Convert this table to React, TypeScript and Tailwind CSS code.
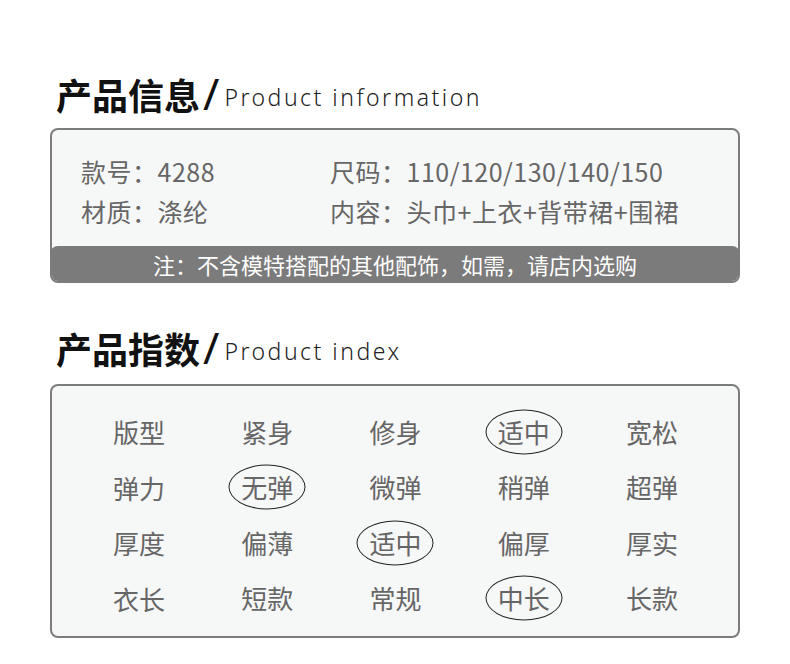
import React from "react";

const cjk = '"Noto Sans CJK SC", "Noto Sans", sans-serif';

function Heading({ zh, en }: { zh: string; en: string }) {
  return (
    <div className="flex items-center pl-[56px] h-[44px]">
      <span className="text-[36px] font-bold text-[#111] leading-none tracking-[0px]" style={{ fontFamily: cjk }}>
        {zh}
      </span>
      <span className="text-[44px] text-[#111] leading-none ml-[3px] mr-[5px] -mt-[2px]" style={{ fontFamily: '"Noto Sans", sans-serif' }}>
        /
      </span>
      <span className="text-[23px] text-[#222] leading-none tracking-[2.5px] mt-[6px] font-light" style={{ fontFamily: '"Noto Sans", sans-serif' }}>
        {en}
      </span>
    </div>
  );
}

const rows: { label: string; opts: string[]; sel: number }[] = [
  { label: "版型", opts: ["紧身", "修身", "适中", "宽松"], sel: 2 },
  { label: "弹力", opts: ["无弹", "微弹", "稍弹", "超弹"], sel: 0 },
  { label: "厚度", opts: ["偏薄", "适中", "偏厚", "厚实"], sel: 1 },
  { label: "衣长", opts: ["短款", "常规", "中长", "长款"], sel: 2 },
];

export default function App() {
  return (
    <div className="w-[790px] h-[664px] bg-white overflow-hidden" style={{ fontFamily: cjk }}>
      <div className="pt-[72px]">
        <Heading zh="产品信息" en="Product information" />
      </div>
      <div className="mx-[50px] mt-[12px] h-[155px] rounded-[8px] border-2 border-[#7c7c7c] bg-[#f6f7f7] flex flex-col overflow-hidden">
        <div className="flex-1 pl-[29px] pt-[21px] text-[25px] leading-[40px] tracking-[0.5px] text-[#666]">
          <div className="flex">
            <div className="w-[249px]">款号：4288</div>
            <div>尺码：110/120/130/140/150</div>
          </div>
          <div className="flex">
            <div className="w-[249px]">材质：涤纶</div>
            <div>内容：头巾+上衣+背带裙+围裙</div>
          </div>
        </div>
        <div className="h-[37px] bg-[#7b7b7b] rounded-[8px] -mx-[2px] -mb-[2px] flex items-center justify-center text-white text-[22px] leading-none pb-[2px]">
          注：不含模特搭配的其他配饰，如需，请店内选购
        </div>
      </div>

      <div className="mt-[43px]">
        <Heading zh="产品指数" en="Product index" />
      </div>
      <div className="mx-[50px] mt-[14px] h-[254px] rounded-[8px] border-2 border-[#7c7c7c] bg-[#f6f7f7] pl-[23px] pr-[22px] pt-[18px]">
        <div className="grid grid-cols-5">
          {rows.map((r) => (
            <React.Fragment key={r.label}>
              <div className="h-[55.5px] flex items-center justify-center text-[26px] text-[#666]">{r.label}</div>
              {r.opts.map((o, i) => (
                <div key={o + i} className="h-[55.5px] flex items-center justify-center text-[26px] text-[#666]">
                  <span className="relative leading-none">
                    {o}
                    {i === r.sel && (
                      <span className="absolute left-1/2 top-1/2 w-[77px] h-[45px] -translate-x-1/2 -translate-y-1/2 rounded-[50%] border border-[#222]" />
                    )}
                  </span>
                </div>
              ))}
            </React.Fragment>
          ))}
        </div>
      </div>
    </div>
  );
}
